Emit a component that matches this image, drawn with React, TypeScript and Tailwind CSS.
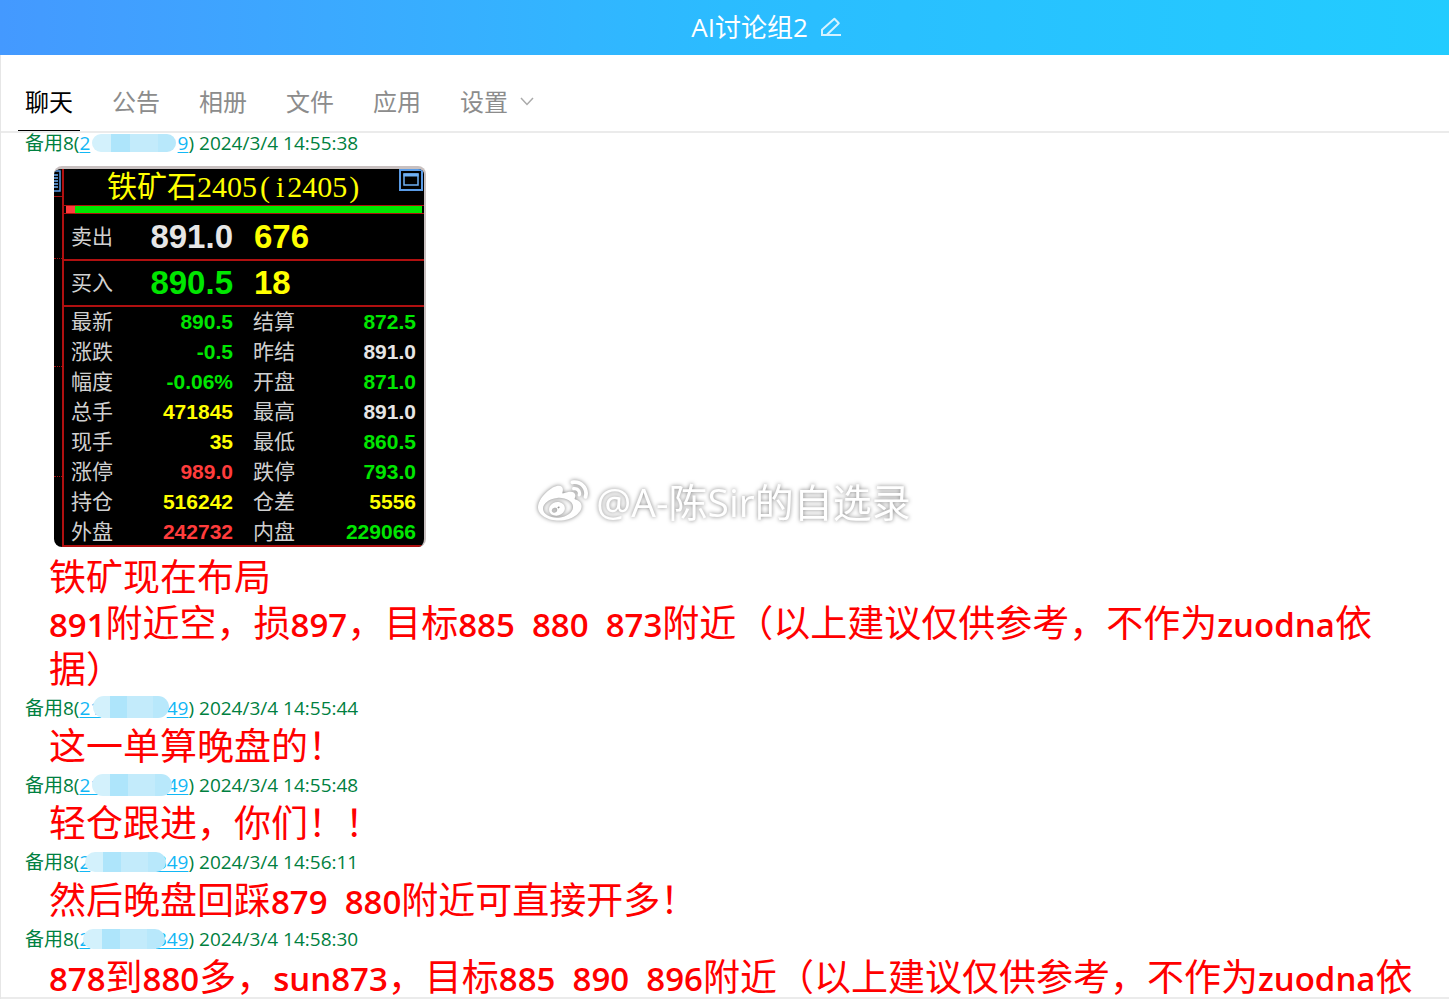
import { FaWeibo } from 'react-icons/fa'

const tabs = ['聊天', '公告', '相册', '文件', '应用']

const messages = [
  {
    time: '2024/3/4 14:55:38',
    head: '2',
    tail: '9',
    mask: 'left-[13px] top-[6px] w-[84px] h-[18px]',
    hasQuote: true,
    lines: [
      '铁矿现在布局',
      '891附近空，损897，目标885  880  873附近（以上建议仅供参考，不作为zuodna依据）',
    ],
  },
  {
    time: '2024/3/4 14:55:44',
    head: '21',
    tail: '49',
    mask: 'left-[14px] top-[3px] w-[76px] h-[22px]',
    lines: ['这一单算晚盘的！'],
  },
  {
    time: '2024/3/4 14:55:48',
    head: '21',
    tail: '49',
    mask: 'left-[13px] top-[4px] w-[80px] h-[22px]',
    lines: ['轻仓跟进，你们！！'],
  },
  {
    time: '2024/3/4 14:56:11',
    head: '2',
    tail: '349',
    mask: 'left-[6px] top-[5px] w-[81px] h-[20px]',
    lines: ['然后晚盘回踩879  880附近可直接开多！'],
  },
  {
    time: '2024/3/4 14:58:30',
    head: '2',
    tail: '349',
    mask: 'left-[4px] top-[5px] w-[82px] h-[20px]',
    lines: ['878到880多，sun873，目标885  890  896附近（以上建议仅供参考，不作为zuodna依据）'],
  },
]

const green = 'text-[#00e600]'
const white = 'text-[#e6e6e6]'
const yellow = 'text-[#ffff00]'
const red = 'text-[#ff3c3c]'

const quoteRows = [
  ['最新', '890.5', green, '结算', '872.5', green],
  ['涨跌', '-0.5', green, '昨结', '891.0', white],
  ['幅度', '-0.06%', green, '开盘', '871.0', green],
  ['总手', '471845', yellow, '最高', '891.0', white],
  ['现手', '35', yellow, '最低', '860.5', green],
  ['涨停', '989.0', red, '跌停', '793.0', green],
  ['持仓', '516242', yellow, '仓差', '5556', yellow],
  ['外盘', '242732', red, '内盘', '229066', green],
]

const EditIcon = () => (
  <svg width="22" height="20" viewBox="0 0 22 20" fill="none" stroke="white" strokeWidth="2" opacity="0.8">
    <path d="M1 18H21" />
    <path d="M2 18V12.8L14.4 1.8L18.8 6.2L6.6 18" strokeLinejoin="round" />
  </svg>
)

const WindowIcon = () => (
  <svg width="24" height="22" viewBox="0 0 24 22" fill="none">
    <rect x="1" y="1" width="22" height="20" stroke="#5a9be6" strokeWidth="2" />
    <rect x="5" y="5" width="14" height="11" stroke="#6fb0f5" strokeWidth="1.5" />
    <path d="M4.5 6H19.5" stroke="#6fb0f5" strokeWidth="3" />
  </svg>
)

const ListIcon = () => (
  <svg width="7" height="22" viewBox="0 0 7 22" fill="none">
    <path d="M0 1H6V21H0" stroke="#5a9be6" strokeWidth="1.5" />
    <path d="M0 5H4M0 8H4M0 11H4M0 14H4M0 17H4" stroke="#6fb0f5" strokeWidth="1.5" />
  </svg>
)

const QuoteCard = () => (
  <div className="mt-2 mb-[7px] ml-[53px] flex h-[381px] w-[372px] overflow-hidden rounded-lg border-t-[3px] border-r-2 border-[#c8c0c0] bg-black">
    <div className="w-[8px] shrink-0">
      <div className="h-[28px] border-b border-[#a01010] pt-px">
        <ListIcon />
      </div>
      <div className="h-[62px] border-b border-dotted border-[#a01010]" />
      <div className="h-[108px] border-b border-dotted border-[#a01010]" />
      <div className="h-[110px] border-b border-dotted border-[#a01010]" />
    </div>
    <div className="min-w-0 flex-1 border-b-2 border-l-2 border-[#b01010]">
      <div className="flex h-[36px] items-start justify-between pr-px pl-[43px]">
        <h2 className="font-['Liberation_Serif','Noto_Sans_CJK_SC',serif] text-[30px] leading-[36px] text-[#ffff00]">
          铁矿石2405<span className="px-[3px]">(</span>
          <span className="px-[3px]">i</span>2405<span className="px-[2px]">)</span>
        </h2>
        <WindowIcon />
      </div>
      <div className="flex h-[9px] border-y border-[#b01010] px-0.5">
        <div className="w-[9px] bg-[#ff3c3c]" />
        <div className="flex-1 bg-[#00e600]" />
      </div>
      <table className="w-full table-fixed border-collapse font-['Liberation_Sans','Noto_Sans_CJK_SC',sans-serif] text-[21px] leading-[30px]">
        <colgroup>
          <col className="w-[59px]" />
          <col className="w-[110px]" />
          <col className="w-[72px]" />
          <col />
        </colgroup>
        <tbody>
          <tr className="h-[46px] border-b-2 border-[#b01010]">
            <th className="pl-[7px] text-left font-normal text-[#d0d0d0]">卖出</th>
            <td className={`text-right text-[33px] font-bold ${white}`}>891.0</td>
            <td colSpan={2} className={`pl-[21px] text-[33px] font-bold ${yellow}`}>676</td>
          </tr>
          <tr className="h-[46px] border-b-2 border-[#b01010]">
            <th className="pl-[7px] text-left font-normal text-[#d0d0d0]">买入</th>
            <td className={`text-right text-[33px] font-bold ${green}`}>890.5</td>
            <td colSpan={2} className={`pl-[21px] text-[33px] font-bold ${yellow}`}>18</td>
          </tr>
          {quoteRows.map(([label, value, color, label2, value2, color2]) => (
            <tr key={label} className="h-[30px]">
              <th className="pl-[7px] text-left font-normal text-[#d0d0d0]">{label}</th>
              <td className={`text-right font-bold ${color}`}>{value}</td>
              <th className="pl-[20px] text-left font-normal text-[#d0d0d0]">{label2}</th>
              <td className={`pr-2 text-right font-bold ${color2}`}>{value2}</td>
            </tr>
          ))}
        </tbody>
      </table>
    </div>
  </div>
)

// 英数字は漢字より少し小さい太字で表示する
const MessageLine = ({ text }: { text: string }) => (
  <p className="pr-6 pl-12 text-[37px] leading-[46px] whitespace-pre-wrap text-[#ff0000]">
    {text.split(/([\x20-\x7e]+)/).map((part, i) =>
      i % 2 === 1 ? (
        <span key={i} className="text-[33px] leading-none font-semibold">{part}</span>
      ) : (
        part
      )
    )}
  </p>
)

const App = () => {
  return (
    <div className="relative flex h-screen flex-col overflow-hidden bg-white font-['Open_Sans','Noto_Sans_CJK_SC',sans-serif]">
      <header className="flex h-[55px] shrink-0 items-center justify-center gap-3 bg-linear-to-r from-[#4499ff] via-[#2bbcff] to-[#22ccff] pb-0.5 pl-[84px] text-white">
        <h1 className="text-[26px] leading-8">AI讨论组2</h1>
        <button type="button" aria-label="编辑">
          <EditIcon />
        </button>
      </header>

      <div className="flex min-h-0 flex-1 flex-col border-l border-[#e6e6e6]">
        {/* タブ */}
        <nav className="flex h-[78px] shrink-0 items-end gap-[25px] border-b-2 border-[#ebebeb] pl-[17px] text-2xl text-[#8c8c8c]">
          {tabs.map((tab, i) => (
            <button
              key={tab}
              type="button"
              className={`h-[58px] border-b px-[7px] ${i === 0 ? 'border-black text-black' : 'border-transparent'}`}
            >
              {tab}
            </button>
          ))}
          <button type="button" className="flex h-[58px] items-center gap-3 border-b border-transparent px-[7px]">
            设置
            <svg width="14" height="9" viewBox="0 0 14 9" fill="none" stroke="#aaaaaa" strokeWidth="1.5">
              <path d="M1 1L7 7.5L13 1" />
            </svg>
          </button>
        </nav>

        {/* メッセージ一覧 */}
        <main className="min-h-0 flex-1 overflow-hidden border-b-2 border-[#ebebeb]">
          <div className="-mt-[6px]">
            {messages.map((message) => (
              <article key={message.time}>
                <div className="flex h-[31px] items-center pl-6 text-[19px] leading-[22px] text-[#008040]">
                  <span>备用8(</span>
                  <a href="#member" className="relative flex w-[109px] justify-between text-[#12b7f5] underline decoration-1 underline-offset-2">
                    <span>{message.head}</span>
                    <span>{message.tail}</span>
                    <span className={`absolute -mt-1 flex overflow-hidden rounded-full ${message.mask}`}>
                      <span className="flex-2 bg-[#d3f1fc]" />
                      <span className="flex-2 bg-[#aee5fb]" />
                      <span className="flex-3 bg-[#c3ebfb]" />
                      <span className="flex-2 bg-[#b8e8fb]" />
                    </span>
                  </a>
                  <span className="whitespace-pre">) {message.time}</span>
                </div>
                {message.hasQuote && <QuoteCard />}
                {message.lines.map((line) => (
                  <MessageLine key={line} text={line} />
                ))}
              </article>
            ))}
          </div>
        </main>
      </div>
      <div className="h-px shrink-0" />

      {/* 透かし */}
      <div className="pointer-events-none absolute inset-0 flex items-center justify-center gap-2 pt-1 text-white drop-shadow-[0_0_2px_rgba(0,0,0,0.5)]">
        <FaWeibo className="size-[50px]" />
        <span className="text-[39px] leading-[46px]">@A-陈Sir的自选录</span>
      </div>
    </div>
  )
}

export default App
